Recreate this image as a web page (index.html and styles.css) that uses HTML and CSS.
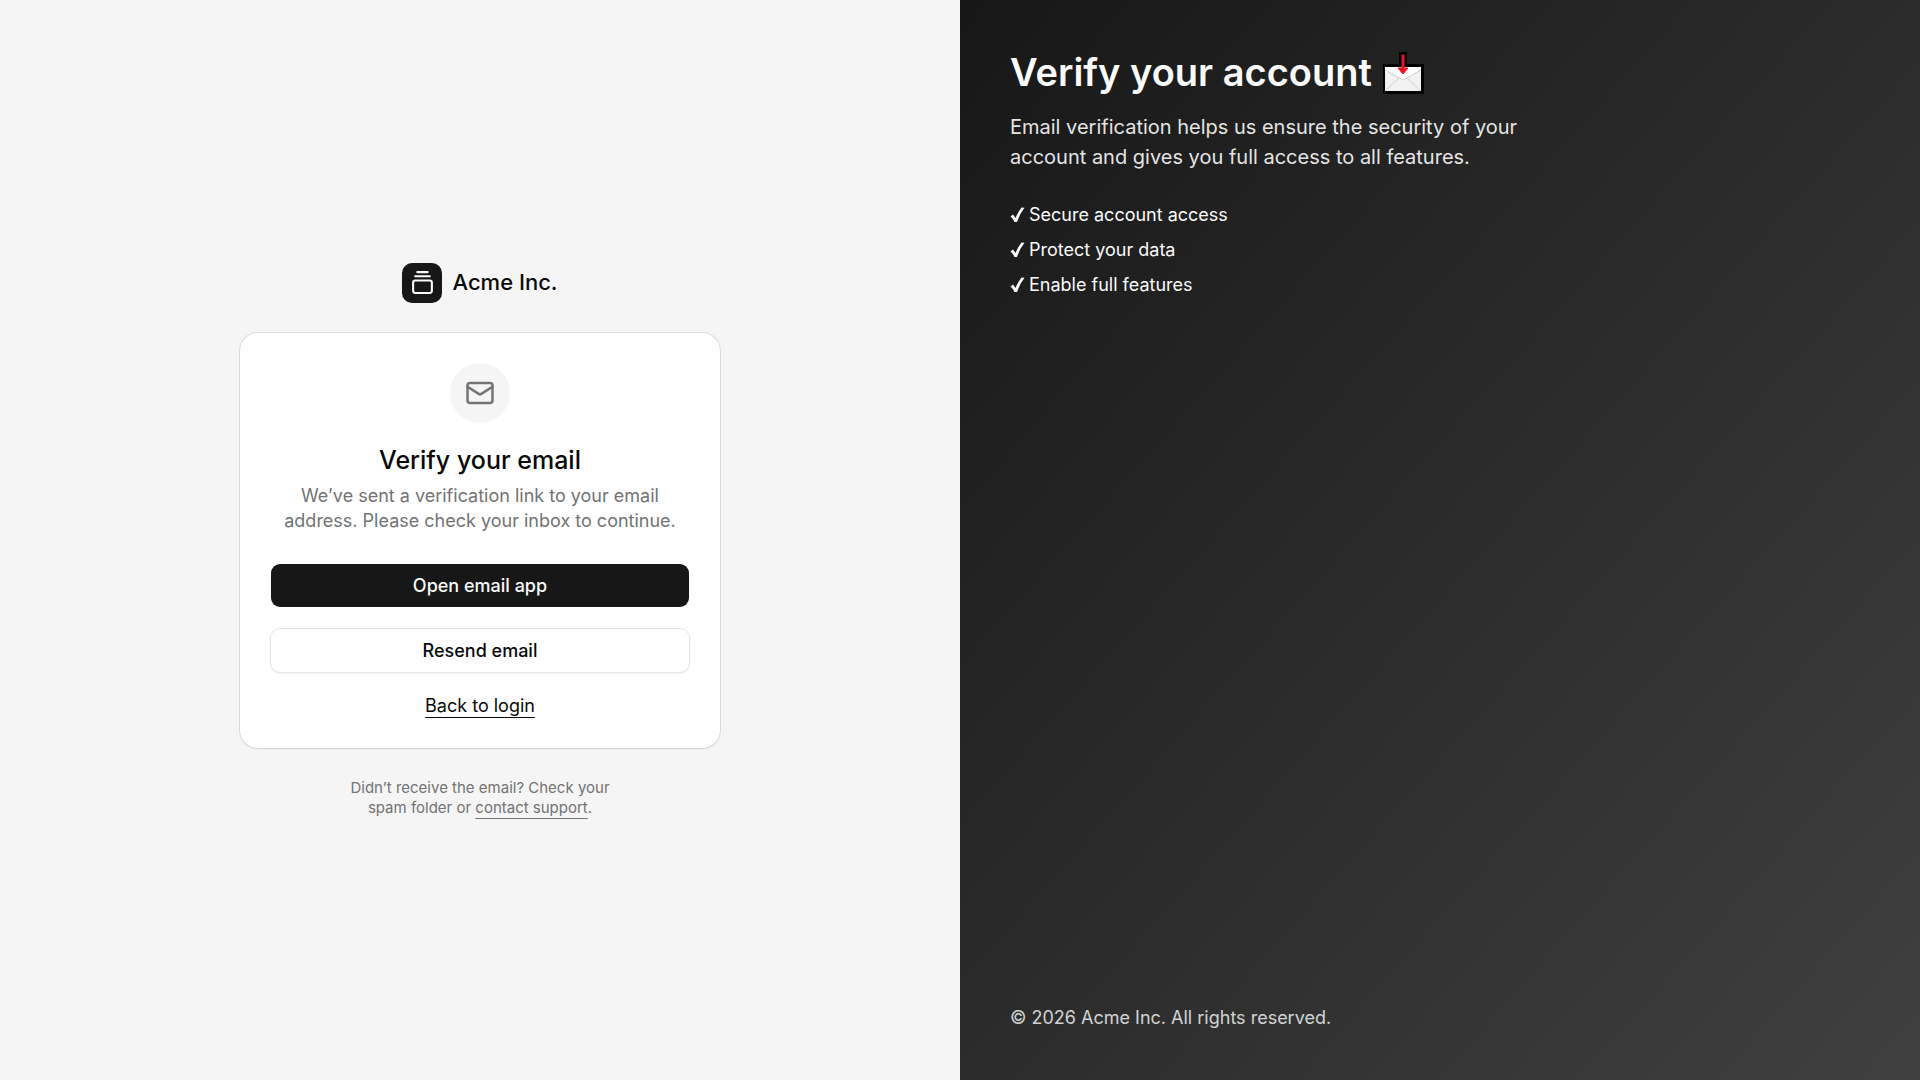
FILE: index.html
```html
<!DOCTYPE html>
<html lang="en">
<head>
    <meta charset="utf-8">
    <meta name="viewport" content="width=device-width, initial-scale=1">
    <title>Verify your email</title>
    <link rel="stylesheet" href="styles.css">
</head>
<body>
    <main class="form-side">
        <div class="brand">
            <span class="brand-icon">
                <svg width="25" height="25" viewBox="0 0 24 24" fill="none" stroke="currentColor" stroke-width="2" stroke-linecap="round" stroke-linejoin="round" aria-hidden="true">
                    <path d="M7 2h10"/>
                    <path d="M5 6h14"/>
                    <rect x="3" y="10" width="18" height="12" rx="2"/>
                </svg>
            </span>
            <span class="brand-name">Acme Inc.</span>
        </div>

        <div class="card">
            <div class="card-icon">
                <svg width="30" height="30" viewBox="0 0 24 24" fill="none" stroke="currentColor" stroke-width="2" stroke-linecap="round" stroke-linejoin="round" aria-hidden="true">
                    <rect x="2" y="4" width="20" height="16" rx="2"/>
                    <path d="m22 7-8.991 5.727a2 2 0 0 1-2.009 0L2 7"/>
                </svg>
            </div>
            <h1 class="card-title">Verify your email</h1>
            <p class="card-text">We’ve sent a verification link to your email address. Please check your inbox to continue.</p>

            <div class="actions">
                <button type="button" class="button button-primary">Open email app</button>
                <button type="button" class="button button-outline">Resend email</button>
                <a href="#login" class="link">Back to login</a>
            </div>
        </div>

        <p class="note">Didn’t receive the email? Check your spam folder or <a href="#support" class="link">contact support</a>.</p>
    </main>

    <aside class="info-side">
        <div>
            <h2 class="info-title">
                Verify your account
                <svg class="emoji" width="42" height="42" viewBox="0 0 42 42" aria-hidden="true">
                    <path d="M17 0h8v12h17v30H1V12h16z" fill="#000"/>
                    <path d="M3 15h36v24H3z" fill="#f2f2f2"/>
                    <path d="M3 15h36v3L23 27q-2 1-4 0L3 18z" fill="#fff"/>
                    <path d="M3 18l16 9q2 1 4 0l16-9M3 39l14-13M39 39L25 26" fill="none" stroke="#d0d0d0" stroke-width="1"/>
                    <path d="M20 3h2v13h4l-5 6-5-6h4z" fill="#e81224" stroke="#e81224"/>
                </svg>
            </h2>
            <p class="info-text">Email verification helps us ensure the security of your account and gives you full access to all features.</p>

            <ul class="features">
                <li><svg class="check" width="15" height="16" viewBox="0 0 15 16" aria-hidden="true"><path d="M.5 9.500 3 7.500l2.500 3.500Q8 5 11.500.5L14.500.8Q9.500 7 7 15H4.500Q3 11.500.5 9.500z"/></svg>Secure account access</li>
                <li><svg class="check" width="15" height="16" viewBox="0 0 15 16" aria-hidden="true"><path d="M.5 9.500 3 7.500l2.500 3.500Q8 5 11.500.5L14.500.8Q9.500 7 7 15H4.500Q3 11.500.5 9.500z"/></svg>Protect your data</li>
                <li><svg class="check" width="15" height="16" viewBox="0 0 15 16" aria-hidden="true"><path d="M.5 9.500 3 7.500l2.500 3.500Q8 5 11.500.5L14.500.8Q9.500 7 7 15H4.500Q3 11.500.5 9.500z"/></svg>Enable full features</li>
            </ul>
        </div>
        <footer class="copyright">© 2026 Acme Inc. All rights reserved.</footer>
    </aside>
</body>
</html>
```
FILE: styles.css
```css
* {
    box-sizing: border-box;
    margin: 0;
    padding: 0;
}

body {
    display: grid;
    grid-template-columns: 1fr 1fr;
    min-height: 100vh;
    font-family: Inter, "Liberation Sans", sans-serif;
    font-size: 18px;
    line-height: 25px;
    color: #0a0a0a;
    background: #f5f5f5;
}

.form-side {
    display: flex;
    flex-direction: column;
    align-items: center;
    justify-content: center;
    gap: 30px;
    padding: 50px;
}

.brand {
    display: flex;
    align-items: center;
    gap: 10px;
}

.brand-icon {
    display: flex;
    align-items: center;
    justify-content: center;
    width: 40px;
    height: 40px;
    border-radius: 10px;
    color: #fafafa;
    background: #171717;
}

.brand-name {
    font-size: 22px;
    font-weight: 500;
}

.card {
    width: 100%;
    max-width: 480px;
    padding: 30px;
    text-align: center;
    background: #fff;
    border-radius: 18px;
    box-shadow: 0 0 0 1px rgba(10, 10, 10, 0.1), 0 1px 2px rgba(0, 0, 0, 0.05);
}

.card-icon {
    display: flex;
    align-items: center;
    justify-content: center;
    width: 60px;
    height: 60px;
    margin: 0 auto 22px;
    border-radius: 50%;
    color: #737373;
    background: #f5f5f5;
}

.card-title {
    margin-bottom: 8px;
    font-size: 25px;
    font-weight: 500;
    line-height: 30px;
}

.card-text {
    color: #737373;
    text-wrap: balance;
}

.actions {
    display: flex;
    flex-direction: column;
    align-items: center;
    gap: 20px;
    margin-top: 30px;
}

.button {
    width: 100%;
    height: 45px;
    border: 1px solid transparent;
    border-radius: 10px;
    font: inherit;
    font-weight: 500;
    cursor: pointer;
}

.button-primary {
    color: #fafafa;
    background: #171717 padding-box;
}

.button-primary:hover {
    background-color: #2e2e2e;
}

.button-outline {
    color: #0a0a0a;
    background: #fff;
    border-color: #e5e5e5;
    box-shadow: 0 1px 2px rgba(0, 0, 0, 0.05);
}

.button-outline:hover {
    background: #f5f5f5;
}

.link {
    color: inherit;
    text-decoration: underline 1px;
    text-decoration-skip-ink: none;
    text-underline-offset: 5px;
}

.note {
    max-width: 300px;
    font-size: 15px;
    line-height: 20px;
    text-align: center;
    text-wrap: balance;
    color: #737373;
}

.info-side {
    display: flex;
    flex-direction: column;
    justify-content: space-between;
    padding: 50px;
    color: #fafafa;
    background: linear-gradient(to bottom right, #171717, #404040);
}

.info-title {
    display: flex;
    align-items: center;
    gap: 10px;
    margin-bottom: 17px;
    font-size: 38px;
    font-weight: 600;
    line-height: 45px;
}

.info-text {
    max-width: 560px;
    font-size: 20px;
    line-height: 30px;
    opacity: 0.9;
}

.features {
    display: flex;
    flex-direction: column;
    gap: 10px;
    margin-top: 30px;
    list-style: none;
}

.features li {
    display: flex;
    align-items: center;
    gap: 4px;
}

.check {
    fill: currentColor;
}

.copyright {
    opacity: 0.8;
}
```
